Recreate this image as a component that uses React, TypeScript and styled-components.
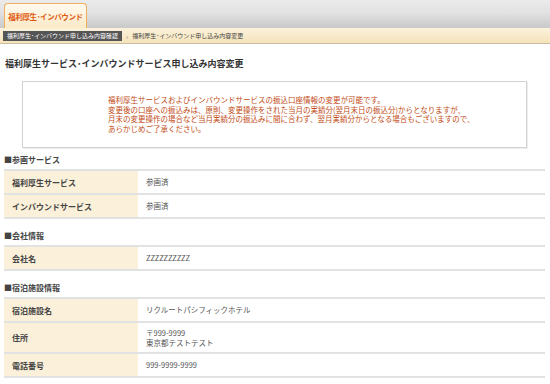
import styled, { createGlobalStyle } from 'styled-components';

const GlobalStyle = createGlobalStyle`
  html, body {
    margin: 0;
    padding: 0;
    background: #fff;
  }
  body {
    font-family: "Noto Sans CJK JP", "Noto Sans", sans-serif;
    color: #333;
    font-size: 8px;
  }
`;

const Page = styled.div`
  width: 550px;
  height: 384px;
  overflow: hidden;
`;

const TabBar = styled.div`
  height: 28px;
  display: flex;
  align-items: flex-end;
  padding-left: 4px;
  box-sizing: border-box;
  background: linear-gradient(#ebebeb 0%, #e2e2e2 45%, #c9c9c9 100%);
`;

const Tab = styled.div`
  width: 83px;
  height: 25px;
  box-sizing: border-box;
  display: flex;
  align-items: center;
  justify-content: center;
  border: 1px solid #f0b060;
  border-bottom: none;
  border-radius: 4px 4px 0 0;
  background: linear-gradient(#fffaf0, #fbe9c6);
  color: #e05a10;
  font-weight: bold;
  font-size: 7.5px;
  letter-spacing: -0.4px;
  white-space: nowrap;
`;

const Crumbs = styled.div`
  height: 15px;
  display: flex;
  align-items: center;
  gap: 4px;
  padding-left: 3px;
  background: linear-gradient(#fbf2dc, #f5e3ba);
  border-bottom: 1px solid #c9bea3;
  font-size: 6px;
  color: #444;
  white-space: nowrap;
`;

const CrumbCurrent = styled.span`
  background: #555;
  color: #fff;
  padding: 1px 4px;
  line-height: 8px;
`;

const Arrow = styled.span`
  color: #888;
  font-size: 7px;
`;

const Title = styled.h1`
  margin: 14px 0 0 5px;
  font-size: 9px;
  line-height: 12px;
  font-weight: bold;
  color: #333;
`;

const Notice = styled.div`
  margin: 11px 23px 0 22px;
  height: 67px;
  box-sizing: border-box;
  border: 1px solid #d2d2d2;
  box-shadow: 1px 1px 0 #eee;
  padding: 13px 0 0 85px;
  color: #c24a14;
  font-size: 7.5px;
  line-height: 9.6px;
  white-space: nowrap;
`;

const SectionHead = styled.h2<{ $top: number }>`
  margin: ${({ $top }) => $top}px 0 0 4px;
  font-size: 8px;
  line-height: 10px;
  font-weight: bold;
  color: #444;
`;

const Table = styled.div`
  margin: 4px 5px 0 4px;
  border-top: 2px solid #e2e2e2;
`;

const Row = styled.div<{ $h: number }>`
  display: grid;
  grid-template-columns: 134px 1fr;
  min-height: ${({ $h }) => $h}px;
  border-bottom: 2px solid #e2e2e2;
`;

const Label = styled.div`
  background: #fbf0d9;
  display: flex;
  align-items: center;
  padding-left: 8px;
  font-weight: bold;
  font-size: 8px;
  color: #444;
`;

const Value = styled.div`
  display: flex;
  flex-direction: column;
  justify-content: center;
  padding-left: 8px;
  font-size: 7.5px;
  line-height: 10px;
  color: #555;

  span {
    color: #555;
  }
`;

type Item = { label: string; value: string[]; h?: number };

const Section = ({ title, top, items }: { title: string; top: number; items: Item[] }) => (
  <>
    <SectionHead $top={top}>■{title}</SectionHead>
    <Table>
      {items.map((it) => (
        <Row key={it.label} $h={it.h ?? 22}>
          <Label>{it.label}</Label>
          <Value>
            {it.value.map((v) => (
              <span key={v}>{v}</span>
            ))}
          </Value>
        </Row>
      ))}
    </Table>
  </>
);

export default function App() {
  return (
    <Page>
      <GlobalStyle />
      <TabBar>
        <Tab>福利厚生･インバウンド</Tab>
      </TabBar>
      <Crumbs>
        <CrumbCurrent>福利厚生･インバウンド申し込み内容確認</CrumbCurrent>
        <Arrow>›</Arrow>
        <span>福利厚生･インバウンド申し込み内容変更</span>
      </Crumbs>
      <Title>福利厚生サービス･インバウンドサービス申し込み内容変更</Title>
      <Notice>
        福利厚生サービスおよびインバウンドサービスの振込口座情報の変更が可能です。
        <br />
        変更後の口座への振込みは、原則、変更操作をされた当月の実績分(翌月末日の振込分)からとなりますが、
        <br />
        月末の変更操作の場合など当月実績分の振込みに間に合わず、翌月実績分からとなる場合もございますので、
        <br />
        あらかじめご了承ください。
      </Notice>
      <Section
        title="参画サービス"
        top={7}
        items={[
          { label: '福利厚生サービス', value: ['参画済'] },
          { label: 'インバウンドサービス', value: ['参画済'] },
        ]}
      />
      <Section
        title="会社情報"
        top={12}
        items={[{ label: '会社名', value: ['ZZZZZZZZZZ'] }]}
      />
      <Section
        title="宿泊施設情報"
        top={12}
        items={[
          { label: '宿泊施設名', value: ['リクルートパシフィックホテル'] },
          { label: '住所', value: ['〒999-9999', '東京都テストテスト'], h: 29 },
          { label: '電話番号', value: ['999-9999-9999'] },
        ]}
      />
    </Page>
  );
}
